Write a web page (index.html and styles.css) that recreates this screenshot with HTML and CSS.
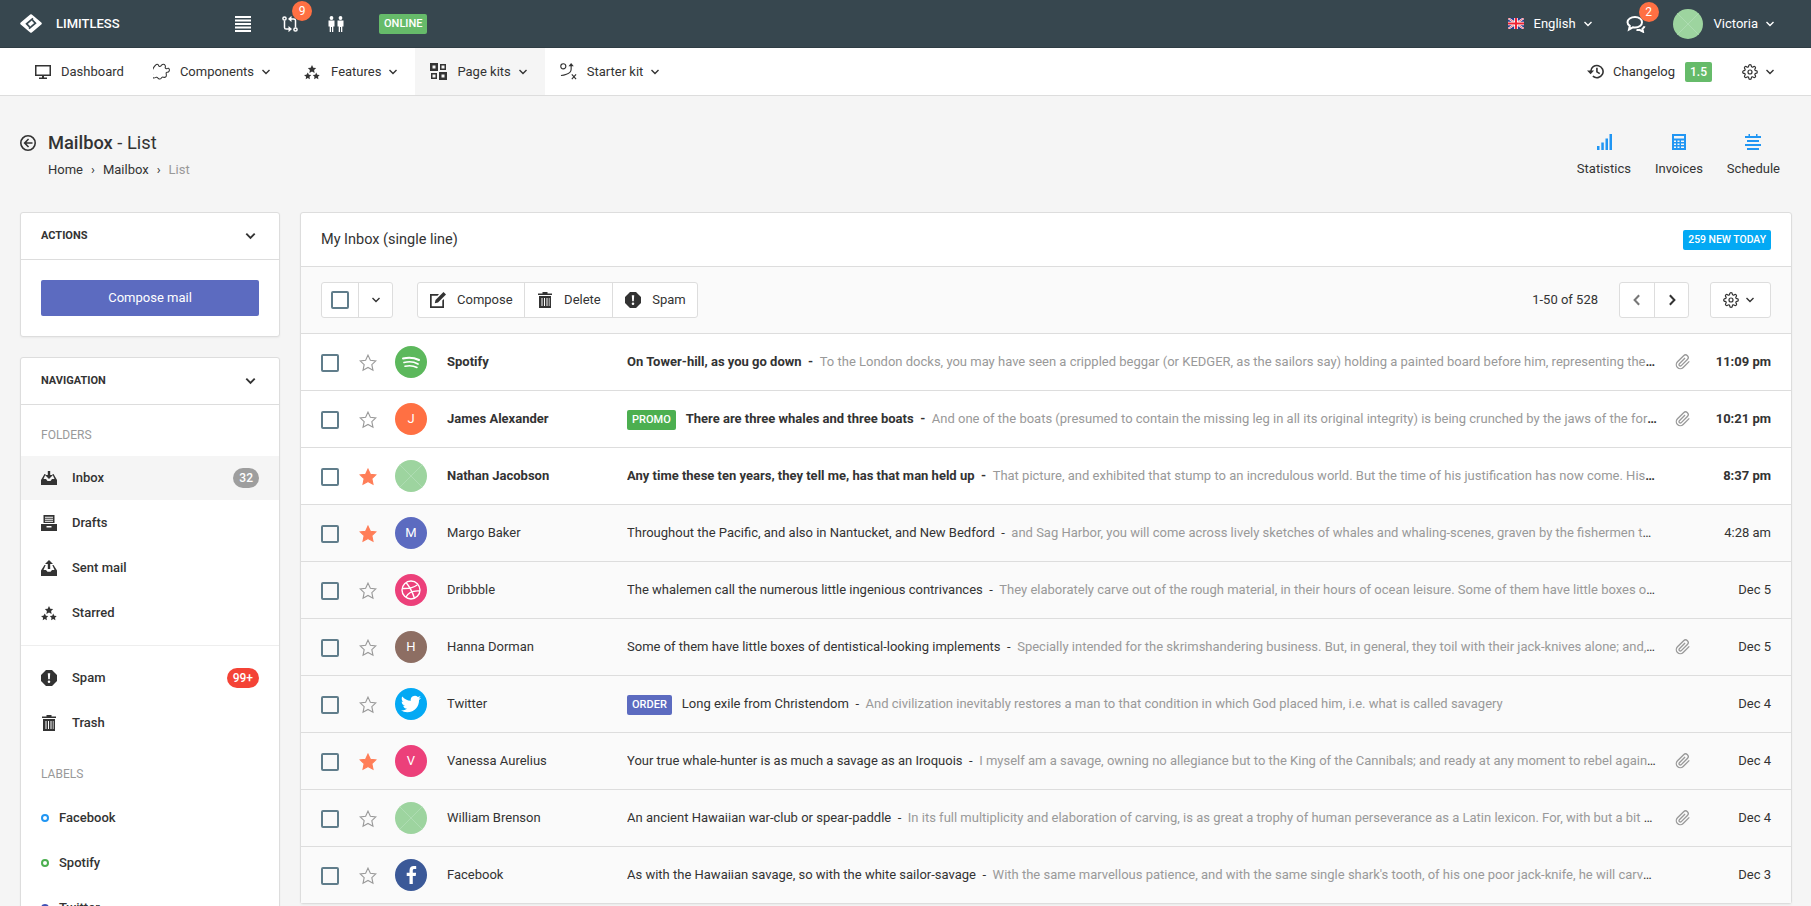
FILE: index.html
```html
<!DOCTYPE html>
<html lang="en">
<head>
    <meta charset="UTF-8" />
    <title>Limitless - Mailbox list</title>
    <link rel="stylesheet" href="styles.css">
</head>
<body>
    <!-- icon sprite -->
    <svg class="sprite" xmlns="http://www.w3.org/2000/svg">
        <symbol id="i-chevron" viewBox="0 0 10 10"><path d="M1.5 3l3.5 3.5L8.5 3" fill="none" stroke="currentColor" stroke-width="1.4"/></symbol>
        <symbol id="i-chevron-bold" viewBox="0 0 10 10"><path d="M.8 2.6L5 6.8l4.2-4.2" fill="none" stroke="currentColor" stroke-width="1.9"/></symbol>
        <symbol id="i-menu" viewBox="0 0 16 16"><path d="M0 0h16v2H0zM0 3.5h16v2H0zM0 7h16v2H0zM0 10.5h16v2H0zM0 14h16v2H0z"/></symbol>
        <symbol id="i-git" viewBox="0 0 16 16"><g fill="none" stroke="currentColor" stroke-width="1.5"><circle cx="2.500" cy="2.500" r="1.600"/><circle cx="13.500" cy="13.500" r="1.600"/><path d="M2.500 4.500v7c0 1 .8 1.600 1.700 1.600H7M13.500 11.500v-7c0-1-.8-1.600-1.700-1.600H9"/></g><path d="M6.500 10l3.500 3.100-3.500 3.100zM9.500 6V-.2L6 2.900z"/></symbol>
        <symbol id="i-people" viewBox="0 0 18 16"><circle cx="4.500" cy="2" r="1.900"/><circle cx="13.500" cy="2" r="1.900"/><path d="M1.500 4.500h6v6H6.300V16H5V11H4v5H2.700v-5.500H1.500zM10.500 4.500h6v6h-1.200V16H14V11h-1v5h-1.300v-5.500h-1.200z"/></symbol>
        <symbol id="i-bubbles" viewBox="0 0 20 18"><g fill="none" stroke="currentColor" stroke-width="2"><path d="M9 2c4 0 7 2.300 7 5.300s-3 5.300-7 5.300c-.8 0-1.500-.1-2.200-.3L3 14.500l.8-3.600C2.400 10 1.500 8.700 1.500 7.300 1.500 4.300 5 2 9 2z"/><path d="M10.500 14.800c1 .3 2 .3 3 .1l3.500 1.800-.5-3c1-.7 1.800-1.500 2-2.500"/></g></symbol>
        <symbol id="i-monitor" viewBox="0 0 16 16"><path fill-rule="evenodd" d="M0 1h16v11H9v1.500h3V15H4v-1.500h3V12H0zM1.500 2.500v8h13v-8z"/></symbol>
        <symbol id="i-puzzle" viewBox="0 0 18 18"><path fill="none" stroke="currentColor" stroke-width="1.100" d="M3 2c1.500-1.500 3 0 3 .8s1.500 1.200 2.500.2 1-1.600 2.500-1.600 2.500 1.500 2 3 1.500 2 2.500 1.300 2.500 1 1.500 3-2.500.5-3 1.500 1 3-.5 4.500-3-.5-4 .5-1.500 2.500-3.500 1.500-1-2-2.500-1.500-3 1.500-4 0 .5-2.500 0-3.500-2.500-1-2-3 2-1 2.500-2.500S2 3 3 2z"/></symbol>
        <symbol id="i-stars" viewBox="0 0 16 16"><path d="M8 1l1.300 2.700 2.900.4-2.100 2 .5 2.900L8 7.600 5.400 9l.5-2.900-2.100-2 2.900-.4zM3.800 8.500l1.100 2.200 2.400.4-1.800 1.700.4 2.400-2.100-1.100-2.100 1.100.4-2.400L0 11.100l2.400-.4zM12.200 8.500l1.100 2.200 2.400.4-1.700 1.700.4 2.400-2.200-1.100-2.100 1.100.4-2.400-1.700-1.700 2.400-.4z"/></symbol>
        <symbol id="i-kits" viewBox="0 0 17 17"><path fill-rule="evenodd" d="M0 0h8v8H0zM2.500 2.500v3h3v-3zM9 9h8v8H9zM11.500 11.500v3h3v-3zM10 1h6v6h-6zM11.500 2.500v3h3v-3zM1 10h6v6H1zM2.500 11.500v3h3v-3z"/></symbol>
        <symbol id="i-strategy" viewBox="0 0 18 18"><g fill="none" stroke="currentColor" stroke-width="1.200"><circle cx="3.500" cy="3.500" r="2.700"/><path d="M11.800 3v3.500c0 3-2.500 4.500-5 5.500-1.800.8-3.500 1.200-5.800 1.200M12.500 12l4.500 5M17 12l-4.500 5"/></g><path d="M11.800 0l2.800 3.500h-5.600z"/></symbol>
        <symbol id="i-history" viewBox="0 0 18 16"><g fill="none" stroke="currentColor" stroke-width="1.700"><path d="M4 8a6.500 6.500 0 1 1 2.200 5"/><path d="M10.500 4v4.400l3 1.800"/></g><path d="M0 7h7.500l-3.700 4z"/></symbol>
        <symbol id="i-gear" viewBox="0 0 24 24"><g fill="none" stroke="currentColor" stroke-width="1.800"><circle cx="12" cy="12" r="3"/><path d="M19.400 15a1.650 1.650 0 0 0 .33 1.820l.06.06a2 2 0 0 1 0 2.830 2 2 0 0 1-2.830 0l-.06-.06a1.650 1.650 0 0 0-1.820-.33 1.650 1.650 0 0 0-1 1.510V21a2 2 0 0 1-2 2 2 2 0 0 1-2-2v-.09A1.650 1.650 0 0 0 9 19.400a1.650 1.650 0 0 0-1.820.33l-.06.06a2 2 0 0 1-2.830 0 2 2 0 0 1 0-2.830l.06-.06a1.650 1.650 0 0 0 .33-1.820 1.650 1.650 0 0 0-1.510-1H3a2 2 0 0 1-2-2 2 2 0 0 1 2-2h.09A1.650 1.650 0 0 0 4.600 9a1.650 1.650 0 0 0-.33-1.820l-.06-.06a2 2 0 0 1 0-2.830 2 2 0 0 1 2.830 0l.06.06a1.650 1.650 0 0 0 1.820.33H9a1.650 1.650 0 0 0 1-1.510V3a2 2 0 0 1 2-2 2 2 0 0 1 2 2v.09a1.650 1.650 0 0 0 1 1.510 1.650 1.650 0 0 0 1.820-.33l.06-.06a2 2 0 0 1 2.830 0 2 2 0 0 1 0 2.830l-.06.06a1.650 1.650 0 0 0-.33 1.820V9a1.650 1.650 0 0 0 1.510 1H21a2 2 0 0 1 2 2 2 2 0 0 1-2 2h-.09a1.650 1.650 0 0 0-1.510 1z"/></g></symbol>
        <symbol id="i-back" viewBox="0 0 16 16"><circle cx="8" cy="8" r="7.200" fill="none" stroke="currentColor" stroke-width="1.600"/><path d="M8 3.500L3.500 8 8 12.500l1.100-1.100L6.500 8.800h6V7.200h-6l2.600-2.600z"/></symbol>
        <symbol id="i-stats" viewBox="0 0 16 16"><path d="M1 12h2.500v4H1zM5.300 8.500h2.500V16H5.300zM9.500 4.500H12V16H9.500zM13.500 0H16v16h-2.500z"/></symbol>
        <symbol id="i-calc" viewBox="0 0 16 16"><path fill-rule="evenodd" d="M1 0h14v16H1zM3 2v2.500h10V2zM3 6.500V8h2V6.500zM6.500 6.500V8h2V6.500zM10 6.500V8h3V6.500zM3 9.500V11h2V9.500zM6.500 9.500V11h2V9.500zM10 9.500V11h3V9.500zM3 12.500V14h2v-1.500zM6.500 12.500V14h2v-1.500zM10 12.500V14h3v-1.500z"/></symbol>
        <symbol id="i-schedule" viewBox="0 0 16 16"><path d="M3.500 0H5v2h6V0h1.500v2H16v2H0V2h3.500zM2 6h12v2H2zM0 10h16v2H0zM2 14h12v2H2z"/></symbol>
        <symbol id="i-inbox" viewBox="0 0 16 16"><path d="M6.800 1h2.400v4H12L8 9 4 5h2.800z"/><path d="M3.500 4h1.200L2.500 9H5l1.500 2h3L11 9h2.500l-2.200-5h1.200L16 10v5H0v-5z"/></symbol>
        <symbol id="i-drafts" viewBox="0 0 16 16"><path fill-rule="evenodd" d="M2.500 0h11v8h-11zM4 1.700v1h8v-1zM4 3.700v1h8v-1zM4 5.700v1h8v-1zM0 9h16v7H0zM5.500 11v1.500h5V11z"/></symbol>
        <symbol id="i-sent" viewBox="0 0 16 16"><path d="M8 0l4 4H9.200v5H6.800V4H4z"/><path d="M3.500 5h1.200L2.500 10H5l1.500 1.800h3L11 10h2.500l-2.200-5h1.200L16 10.500V16H0v-5.500z"/></symbol>
        <symbol id="i-spam" viewBox="0 0 16 16"><path fill-rule="evenodd" d="M5 0h6l5 5v6l-5 5H5l-5-5V5zM6.800 3.200l.4 6h1.600l.4-6zM8 10.500a1.300 1.300 0 1 0 0 2.600 1.300 1.300 0 0 0 0-2.600z"/></symbol>
        <symbol id="i-trash" viewBox="0 0 16 16"><path fill-rule="evenodd" d="M5.500 0h5v1.500H15V3H1V1.500h4.500zM2 4h12v12H2zM4.500 6v8h1V6zM7 6v8h1V6zM9.500 6v8h1V6zM11.800 6v8h.7V6z"/></symbol>
        <symbol id="i-compose" viewBox="0 0 16 16"><path d="M0 2h9L7.500 3.700H1.700v10.600h10.600V8.500L14 7v9H0z"/><path d="M13.500 0L16 2.500 8 10.500l-3.200.7.700-3.200z"/></symbol>
        <symbol id="i-clip" viewBox="0 0 24 24"><path fill="none" stroke="currentColor" stroke-width="2" d="M21.440 11.050l-9.190 9.190a6 6 0 0 1-8.490-8.490l9.190-9.190a4 4 0 0 1 5.660 5.660l-9.200 9.190a2 2 0 0 1-2.830-2.830l8.490-8.480"/></symbol>
        <symbol id="i-star" viewBox="0 0 16 16"><path d="M8 1l2.100 4.500 4.900.6-3.600 3.400 1 4.900L8 12l-4.400 2.400 1-4.900L1 6.100l4.900-.6z"/></symbol>
        <symbol id="i-placeholder" viewBox="0 0 32 32"><path d="M0 0h32v32H0z" fill="#9dd49f"/><path d="M4 4l24 24M28 4L4 28" stroke="#aedcb2" stroke-width="1"/></symbol>
    </svg>

    <header class="navbar">
        <a class="brand">
            <svg class="logo" viewBox="0 0 22 19"><path d="M11 1.500l9.500 8-9.500 8-9.500-8z" fill="#fff" stroke="#fff" stroke-width="2.500" stroke-linejoin="round"/><path d="M13 4.300L6.600 9.800l3 3M9 14.700l6.400-5.500-3-3" fill="none" stroke="#37474f" stroke-width="1.700"/></svg>
            <span>LIMITLESS</span>
        </a>
        <div class="navbar-tools">
            <svg class="icon"><use href="#i-menu"/></svg>
            <span class="icon-badge git"><svg class="icon"><use href="#i-git"/></svg><b class="count">9</b></span>
            <svg class="icon people"><use href="#i-people"/></svg>
            <span class="label label-online">ONLINE</span>
        </div>
        <div class="navbar-right">
            <a class="lang">
                <svg class="flag" viewBox="0 0 16 11"><path fill="#2b3a8c" d="M0 0h16v11H0z"/><path stroke="#fff" stroke-width="2" d="M0 0l16 11M16 0L0 11"/><path stroke="#e23" stroke-width=".7" d="M0 0l16 11M16 0L0 11"/><path stroke="#fff" stroke-width="3.600" d="M8 0v11M0 5.500h16"/><path stroke="#e23" stroke-width="2" d="M8 0v11M0 5.500h16"/></svg>
                English
                <svg class="caret"><use href="#i-chevron"/></svg>
            </a>
            <span class="icon-badge chat"><svg class="icon"><use href="#i-bubbles"/></svg><b class="count">2</b></span>
            <a class="user">
                <svg class="avatar-small"><use href="#i-placeholder"/></svg>
                Victoria
                <svg class="caret"><use href="#i-chevron"/></svg>
            </a>
        </div>
    </header>

    <nav class="subnav">
        <a class="subnav-item"><svg class="icon"><use href="#i-monitor"/></svg>Dashboard</a>
        <a class="subnav-item has-caret"><svg class="icon wide"><use href="#i-puzzle"/></svg>Components<svg class="caret"><use href="#i-chevron"/></svg></a>
        <a class="subnav-item has-caret"><svg class="icon stars"><use href="#i-stars"/></svg>Features<svg class="caret"><use href="#i-chevron"/></svg></a>
        <a class="subnav-item has-caret current"><svg class="icon wide"><use href="#i-kits"/></svg>Page kits<svg class="caret"><use href="#i-chevron"/></svg></a>
        <a class="subnav-item has-caret"><svg class="icon wide"><use href="#i-strategy"/></svg>Starter kit<svg class="caret"><use href="#i-chevron"/></svg></a>
        <div class="subnav-right">
            <a class="changelog"><svg class="icon wide"><use href="#i-history"/></svg>Changelog<span class="label label-green">1.5</span></a>
            <a class="subnav-gear"><svg class="icon"><use href="#i-gear"/></svg><svg class="caret"><use href="#i-chevron"/></svg></a>
        </div>
    </nav>

    <section class="page-header">
        <div>
            <h1><svg class="icon"><use href="#i-back"/></svg><span><b>Mailbox</b> - List</span></h1>
            <div class="breadcrumb"><a>Home</a><i>›</i><a>Mailbox</a><i>›</i><span>List</span></div>
        </div>
        <div class="header-links">
            <a><svg class="icon"><use href="#i-stats"/></svg>Statistics</a>
            <a><svg class="icon"><use href="#i-calc"/></svg>Invoices</a>
            <a><svg class="icon"><use href="#i-schedule"/></svg>Schedule</a>
        </div>
    </section>

    <main class="content">
        <aside class="sidebar">
            <div class="card">
                <div class="side-title">Actions<svg class="side-chevron"><use href="#i-chevron-bold"/></svg></div>
                <div class="side-body"><button class="compose-btn">Compose mail</button></div>
            </div>
            <div class="card">
                <div class="side-title">Navigation<svg class="side-chevron"><use href="#i-chevron-bold"/></svg></div>
                <div class="side-nav">
                    <div class="side-heading">Folders</div>
                    <a class="side-link active"><svg class="icon"><use href="#i-inbox"/></svg>Inbox<span class="pill pill-grey">32</span></a>
                    <a class="side-link"><svg class="icon"><use href="#i-drafts"/></svg>Drafts</a>
                    <a class="side-link"><svg class="icon"><use href="#i-sent"/></svg>Sent mail</a>
                    <a class="side-link"><svg class="icon"><use href="#i-stars"/></svg>Starred</a>
                    <hr class="side-divider">
                    <a class="side-link"><svg class="icon"><use href="#i-spam"/></svg>Spam<span class="pill pill-red">99+</span></a>
                    <a class="side-link"><svg class="icon"><use href="#i-trash"/></svg>Trash</a>
                    <div class="side-heading labels">Labels</div>
                    <a class="side-link"><span class="dot dot-blue"></span>Facebook</a>
                    <a class="side-link"><span class="dot dot-green"></span>Spotify</a>
                    <a class="side-link"><span class="dot dot-indigo"></span>Twitter</a>
                </div>
            </div>
        </aside>

        <section class="card inbox">
            <div class="inbox-title">
                <h2>My Inbox (single line)</h2>
                <span class="label label-sky">259 new today</span>
            </div>
            <div class="toolbar">
                <div class="btn-group">
                    <span class="btn btn-check"><span class="check"></span></span>
                    <span class="btn btn-caret"><svg class="caret"><use href="#i-chevron"/></svg></span>
                </div>
                <div class="btn-group">
                    <span class="btn"><svg class="icon"><use href="#i-compose"/></svg>Compose</span>
                    <span class="btn"><svg class="icon"><use href="#i-trash"/></svg>Delete</span>
                    <span class="btn"><svg class="icon"><use href="#i-spam"/></svg>Spam</span>
                </div>
                <span class="paging">1-50 of 528</span>
                <div class="btn-group">
                    <span class="btn btn-page muted"><svg viewBox="0 0 10 10"><path d="M6.800 1L3 5l3.800 4" fill="none" stroke="currentColor" stroke-width="1.700"/></svg></span>
                    <span class="btn btn-page"><svg viewBox="0 0 10 10"><path d="M3.200 1L7 5 3.200 9" fill="none" stroke="currentColor" stroke-width="1.700"/></svg></span>
                </div>
                <div class="btn-group">
                    <span class="btn btn-gear"><svg class="icon"><use href="#i-gear"/></svg><svg class="caret"><use href="#i-chevron"/></svg></span>
                </div>
            </div>

            <div class="mail unread">
                <span class="check"></span>
                <svg class="star"><use href="#i-star"/></svg>
                <span class="pic pic-green"><svg viewBox="0 0 32 32" fill="none" stroke="#fff" stroke-linecap="round"><path stroke-width="2" d="M8 12.500c5.500-1.500 11-1 16 1.500"/><path stroke-width="1.700" d="M9 16.500c4.500-1.200 10-.8 14 1.500"/><path stroke-width="1.500" d="M10 20.300c4-1 8.500-.6 12 1.200"/></svg></span>
                <span class="sender">Spotify</span>
                <p class="line"><span class="subject">On Tower-hill, as you go down</span><span class="sep">-</span><span class="preview">To the London docks, you may have seen a crippled beggar (or KEDGER, as the sailors say) holding a painted board before him, representing the tragic scene in which he lost his leg.</span></p>
                <svg class="clip"><use href="#i-clip"/></svg>
                <span class="time">11:09 pm</span>
            </div>
            <div class="mail unread">
                <span class="check"></span>
                <svg class="star"><use href="#i-star"/></svg>
                <span class="pic pic-orange">J</span>
                <span class="sender">James Alexander</span>
                <p class="line"><span class="label label-promo">Promo</span><span class="subject">There are three whales and three boats</span><span class="sep">-</span><span class="preview">And one of the boats (presumed to contain the missing leg in all its original integrity) is being crunched by the jaws of the foremost whale.</span></p>
                <svg class="clip"><use href="#i-clip"/></svg>
                <span class="time">10:21 pm</span>
            </div>
            <div class="mail unread">
                <span class="check"></span>
                <svg class="star on"><use href="#i-star"/></svg>
                <svg class="pic"><use href="#i-placeholder"/></svg>
                <span class="sender">Nathan Jacobson</span>
                <p class="line"><span class="subject">Any time these ten years, they tell me, has that man held up</span><span class="sep">-</span><span class="preview">That picture, and exhibited that stump to an incredulous world. But the time of his justification has now come. His three whales are as good whales as were ever published in Wapping.</span></p>
                <span></span>
                <span class="time">8:37 pm</span>
            </div>
            <div class="mail">
                <span class="check"></span>
                <svg class="star on"><use href="#i-star"/></svg>
                <span class="pic pic-indigo">M</span>
                <span class="sender">Margo Baker</span>
                <p class="line"><span class="subject">Throughout the Pacific, and also in Nantucket, and New Bedford</span><span class="sep">-</span><span class="preview">and Sag Harbor, you will come across lively sketches of whales and whaling-scenes, graven by the fishermen themselves on Sperm Whale-teeth.</span></p>
                <span></span>
                <span class="time">4:28 am</span>
            </div>
            <div class="mail">
                <span class="check"></span>
                <svg class="star"><use href="#i-star"/></svg>
                <span class="pic pic-pink"><svg viewBox="0 0 32 32" fill="none" stroke="#fff" stroke-width="1.400"><circle cx="16" cy="16" r="9"/><path d="M11 8.500c3 3.500 6.500 9.500 8.500 16M7.200 14.500c5 .3 11-.5 15-3.500M10.800 23.300c2-4 7-7 14.200-6.300"/></svg></span>
                <span class="sender">Dribbble</span>
                <p class="line"><span class="subject">The whalemen call the numerous little ingenious contrivances</span><span class="sep">-</span><span class="preview">They elaborately carve out of the rough material, in their hours of ocean leisure. Some of them have little boxes of dentistical-looking implements.</span></p>
                <span></span>
                <span class="time">Dec 5</span>
            </div>
            <div class="mail">
                <span class="check"></span>
                <svg class="star"><use href="#i-star"/></svg>
                <span class="pic pic-brown">H</span>
                <span class="sender">Hanna Dorman</span>
                <p class="line"><span class="subject">Some of them have little boxes of dentistical-looking implements</span><span class="sep">-</span><span class="preview">Specially intended for the skrimshandering business. But, in general, they toil with their jack-knives alone; and, with that almost omnipotent tool of the sailor.</span></p>
                <svg class="clip"><use href="#i-clip"/></svg>
                <span class="time">Dec 5</span>
            </div>
            <div class="mail">
                <span class="check"></span>
                <svg class="star"><use href="#i-star"/></svg>
                <span class="pic pic-sky"><svg viewBox="-7 -7 38 38" fill="#fff"><path d="M23.953 4.570a10 10 0 01-2.825.775 4.958 4.958 0 002.163-2.723c-.951.555-2.005.959-3.127 1.184a4.920 4.920 0 00-8.384 4.482C7.690 8.095 4.067 6.130 1.640 3.162a4.822 4.822 0 00-.666 2.475c0 1.710.870 3.213 2.188 4.096a4.904 4.904 0 01-2.228-.616v.060a4.923 4.923 0 003.946 4.827 4.996 4.996 0 01-2.212.085 4.936 4.936 0 004.604 3.417 9.867 9.867 0 01-6.102 2.105c-.390 0-.779-.023-1.170-.067a13.995 13.995 0 007.557 2.209c9.053 0 13.998-7.496 13.998-13.985 0-.210 0-.420-.015-.630A9.935 9.935 0 0024 4.590z"/></svg></span>
                <span class="sender">Twitter</span>
                <p class="line"><span class="label label-order">Order</span><span class="subject">Long exile from Christendom</span><span class="sep">-</span><span class="preview">And civilization inevitably restores a man to that condition in which God placed him, i.e. what is called savagery</span></p>
                <span></span>
                <span class="time">Dec 4</span>
            </div>
            <div class="mail">
                <span class="check"></span>
                <svg class="star on"><use href="#i-star"/></svg>
                <span class="pic pic-pink">V</span>
                <span class="sender">Vanessa Aurelius</span>
                <p class="line"><span class="subject">Your true whale-hunter is as much a savage as an Iroquois</span><span class="sep">-</span><span class="preview">I myself am a savage, owning no allegiance but to the King of the Cannibals; and ready at any moment to rebel against him, and to tell you so.</span></p>
                <svg class="clip"><use href="#i-clip"/></svg>
                <span class="time">Dec 4</span>
            </div>
            <div class="mail">
                <span class="check"></span>
                <svg class="star"><use href="#i-star"/></svg>
                <svg class="pic"><use href="#i-placeholder"/></svg>
                <span class="sender">William Brenson</span>
                <p class="line"><span class="subject">An ancient Hawaiian war-club or spear-paddle</span><span class="sep">-</span><span class="preview">In its full multiplicity and elaboration of carving, is as great a trophy of human perseverance as a Latin lexicon. For, with but a bit of broken sea-shell or a shark's tooth.</span></p>
                <svg class="clip"><use href="#i-clip"/></svg>
                <span class="time">Dec 4</span>
            </div>
            <div class="mail">
                <span class="check"></span>
                <svg class="star"><use href="#i-star"/></svg>
                <span class="pic pic-fb"><svg viewBox="0 0 32 32" fill="#fff"><path d="M17.800 25v-8h2.900l.4-3.300h-3.300v-2c0-1 .3-1.600 1.700-1.600h1.700V7.200c-.3 0-1.300-.1-2.500-.1-2.500 0-4.200 1.500-4.200 4.300v2.300h-2.800V17h2.800v8z"/></svg></span>
                <span class="sender">Facebook</span>
                <p class="line"><span class="subject">As with the Hawaiian savage, so with the white sailor-savage</span><span class="sep">-</span><span class="preview">With the same marvellous patience, and with the same single shark's tooth, of his one poor jack-knife, he will carve you a bit of bone sculpture, not quite as workmanlike.</span></p>
                <span></span>
                <span class="time">Dec 3</span>
            </div>
        </section>
    </main>
</body>
</html>
```

FILE: styles.css
```css
html, body {
    height: 100%;
    overflow: hidden;
}

body {
    margin: 0;
    font-family: Roboto, "Liberation Sans", sans-serif;
    font-size: 13px;
    line-height: 20px;
    color: #333;
    background-color: #f5f5f5;
}

a {
    color: inherit;
    text-decoration: none;
}

.sprite {
    display: none;
}

.icon {
    width: 16px;
    height: 16px;
    fill: currentColor;
    flex: none;
}

.icon.wide {
    width: 17px;
    height: 17px;
}

.caret {
    width: 10px;
    height: 10px;
    flex: none;
}

/* top bar */
.navbar {
    display: flex;
    align-items: center;
    height: 47px;
    padding: 0 36px 0 20px;
    border-bottom: 1px solid #2f3d44;
    background-color: #37474f;
    color: #fff;
}

.brand {
    display: flex;
    align-items: center;
    gap: 14px;
    width: 215px;
    font-size: 13px;
    font-weight: 500;
}

.logo {
    width: 22px;
    height: 19px;
}

.navbar-tools {
    display: flex;
    align-items: center;
}

.navbar-tools .people {
    width: 18px;
    margin-left: 29px;
}

.icon-badge {
    position: relative;
    display: flex;
    margin-left: 31px;
}

.count {
    position: absolute;
    top: -15px;
    left: 10px;
    width: 20px;
    height: 20px;
    border-radius: 50%;
    background-color: #ff7043;
    font-size: 12px;
    font-weight: 400;
    text-align: center;
}

.label {
    display: inline-block;
    padding: 0 5px;
    border-radius: 2px;
    color: #fff;
    font-size: 11px;
    font-weight: 500;
    text-transform: uppercase;
}

.label-online {
    margin-left: 34px;
    background-color: #66bb6a;
}

.navbar-right {
    display: flex;
    align-items: center;
    margin-left: auto;
}

.lang, .user {
    display: flex;
    align-items: center;
}

.flag {
    width: 16px;
    height: 11px;
    margin-right: 10px;
}

.lang .caret, .user .caret {
    margin-left: 7px;
}

.chat {
    margin-left: 33px;
}

.chat .icon {
    width: 20px;
    height: 18px;
}

.chat .count {
    left: 13px;
    top: -13px;
}

.user {
    margin-left: 27px;
}

.avatar-small {
    width: 30px;
    height: 30px;
    margin-right: 11px;
    border-radius: 50%;
}

/* second bar */
.subnav {
    display: flex;
    height: 47px;
    padding: 0 36px 0 20px;
    border-bottom: 1px solid #ddd;
    background-color: #fff;
}

.subnav-item {
    display: flex;
    align-items: center;
    padding: 0 15px;
    color: #333;
}

.subnav-item:first-child {
    padding-right: 14px;
}

.subnav-item .icon {
    margin-right: 10px;
}

.subnav-item .icon.stars {
    margin: 0 11px 0 1px;
}

.subnav-item.has-caret {
    padding-right: 17px;
}

.subnav-item .caret {
    margin-left: 7px;
}

.subnav-item.current {
    background-color: #f5f5f5;
}

.subnav-right {
    display: flex;
    align-items: center;
    margin-left: auto;
}

.changelog {
    display: flex;
    align-items: center;
}

.changelog .icon {
    margin-right: 9px;
}

.label-green {
    margin-left: 10px;
    background-color: #66bb6a;
    font-size: 12px;
}

.subnav-gear {
    display: flex;
    align-items: center;
    gap: 7px;
    margin-left: 30px;
}

/* page header */
.page-header {
    display: flex;
    justify-content: space-between;
    height: 116px;
    padding: 36px 31px 0 20px;
    box-sizing: border-box;
}

.page-header h1 {
    display: flex;
    align-items: center;
    gap: 12px;
    margin: 0;
    font-size: 18.300px;
    font-weight: 400;
    line-height: 22px;
}

.page-header h1 b {
    font-weight: 500;
}

.breadcrumb {
    display: flex;
    margin: 6px 0 0 28px;
}

.breadcrumb i {
    margin: 0 8px;
    font-style: normal;
}

.breadcrumb span {
    color: #999;
}

.header-links {
    display: flex;
    gap: 24px;
    padding-top: 2px;
}

.header-links a {
    display: flex;
    flex-direction: column;
    align-items: center;
    gap: 9px;
}

.header-links .icon {
    color: #2196f3;
}

/* main layout */
.content {
    display: flex;
    gap: 20px;
    align-items: flex-start;
    padding: 0 19px 0 20px;
}

.card {
    border: 1px solid #ddd;
    border-radius: 3px;
    background-color: #fff;
    box-shadow: 0 1px 2px rgba(0, 0, 0, .05);
}

.sidebar {
    display: flex;
    flex-direction: column;
    gap: 20px;
    flex: none;
    width: 260px;
}

.side-title {
    display: flex;
    align-items: center;
    justify-content: space-between;
    height: 46px;
    padding: 0 23px 0 20px;
    border-bottom: 1px solid #ddd;
    font-size: 11px;
    font-weight: 700;
    text-transform: uppercase;
}

.side-chevron {
    width: 11px;
    height: 10px;
}

.side-body {
    padding: 20px;
}

.compose-btn {
    display: block;
    width: 100%;
    height: 36px;
    border: 0;
    border-radius: 2px;
    background-color: #5c6bc0;
    color: #fff;
    font: inherit;
}

.side-nav {
    padding-top: 20px;
}

.side-heading {
    height: 20px;
    padding: 0 20px;
    margin-bottom: 11px;
    color: #999;
    font-size: 12px;
    text-transform: uppercase;
}

.side-heading.labels {
    margin-top: 19px;
    margin-bottom: 12px;
}

.side-link {
    display: flex;
    align-items: center;
    height: 44px;
    margin-top: 1px;
    padding: 0 20px;
    font-weight: 500;
}

.side-link .icon {
    margin-right: 15px;
}

.side-link.active {
    background-color: #f5f5f5;
}

.pill {
    margin-left: auto;
    padding: 0 6px;
    border-radius: 100px;
    color: #fff;
    font-size: 12px;
    font-weight: 500;
    line-height: 20px;
}

.pill-grey {
    background-color: #9e9e9e;
}

.pill-red {
    background-color: #f44336;
}

.side-divider {
    margin: 10px 0;
    border: 0;
    border-top: 1px solid #eee;
}

.dot {
    width: 8px;
    height: 8px;
    margin-right: 10px;
    box-sizing: border-box;
    border: 2px solid;
    border-radius: 50%;
}

.dot-blue {
    color: #2196f3;
}

.dot-green {
    color: #4caf50;
}

.dot-indigo {
    color: #3f51b5;
}

/* inbox */
.inbox {
    flex: 1;
    min-width: 0;
}

.inbox-title {
    display: flex;
    align-items: center;
    justify-content: space-between;
    height: 53px;
    padding: 0 20px;
    border-bottom: 1px solid #ddd;
}

.inbox-title h2 {
    margin: 0;
    font-size: 14.500px;
    font-weight: 400;
}

.label-sky {
    background-color: #03a9f4;
    font-size: 10.400px;
}

.toolbar {
    display: flex;
    align-items: center;
    height: 66px;
    padding: 0 20px;
    background-color: #fafafa;
}

.btn-group {
    display: flex;
    height: 36px;
    box-sizing: border-box;
    border: 1px solid #ddd;
    border-radius: 3px;
    background-color: #fff;
}

.toolbar > .btn-group:nth-child(2) {
    margin-left: 24px;
}

.toolbar > .btn-group:last-child {
    margin-left: 21px;
}

.btn {
    display: flex;
    align-items: center;
    gap: 11px;
    padding: 0 11.500px 0 12px;
    border-left: 1px solid #ddd;
}

.btn:first-child {
    border-left: 0;
}

.btn-check {
    width: 36px;
    padding: 0 9px;
    box-sizing: border-box;
}

.btn-caret, .btn-page {
    width: 34px;
    padding: 0;
    box-sizing: border-box;
    justify-content: center;
}

.btn-page svg {
    width: 12px;
    height: 12px;
}

.btn-page.muted {
    color: #777;
}

.btn-gear {
    gap: 6px;
    padding: 0 15px 0 12px;
}

.paging {
    margin: 0 21px 0 auto;
}

.check {
    display: block;
    width: 18px;
    height: 18px;
    box-sizing: border-box;
    border: 2px solid #607d8b;
    border-radius: 2px;
}

.mail {
    display: grid;
    grid-template-columns: 38px 36px 52px 180px minmax(0, 1fr) 52px 61px;
    align-items: center;
    height: 57px;
    padding: 0 20px;
    box-sizing: border-box;
    border-top: 1px solid #ddd;
    background-color: #fafafa;
}

.mail.unread {
    background-color: #fff;
    font-weight: 700;
}

.mail .check {
    margin-top: 2px;
}

.star {
    width: 18px;
    height: 18px;
    margin-top: 1px;
    fill: none;
    stroke: #999;
    stroke-width: 1;
}

.star.on {
    fill: #ff7e58;
    stroke: #ff7e58;
}

.pic {
    display: flex;
    align-items: center;
    justify-content: center;
    width: 32px;
    height: 32px;
    border-radius: 50%;
    overflow: hidden;
    color: #fff;
    font-weight: 400;
}

.pic svg {
    width: 32px;
    height: 32px;
}

.pic-green {
    background-color: #5cb85c;
}

.pic-orange {
    background-color: #ff7043;
}

.pic-indigo {
    background-color: #5c6bc0;
}

.pic-pink {
    background-color: #ec407a;
}

.pic-brown {
    background-color: #8d6e63;
}

.pic-sky {
    background-color: #03a9f4;
}

.pic-fb {
    background-color: #3b5998;
}

.line {
    margin: 0;
    overflow: hidden;
    white-space: nowrap;
    text-overflow: ellipsis;
}

.sep {
    margin: 0 6.500px;
}

.preview {
    color: #999;
    font-weight: 400;
}

.label-promo, .label-order {
    margin-right: 10px;
    font-size: 11px;
}

.label-promo {
    background-color: #4caf50;
}

.label-order {
    background-color: #5c6bc0;
}

.clip {
    width: 16px;
    height: 16px;
    margin-left: 17px;
    color: #999;
}

.time {
    text-align: right;
}
```
